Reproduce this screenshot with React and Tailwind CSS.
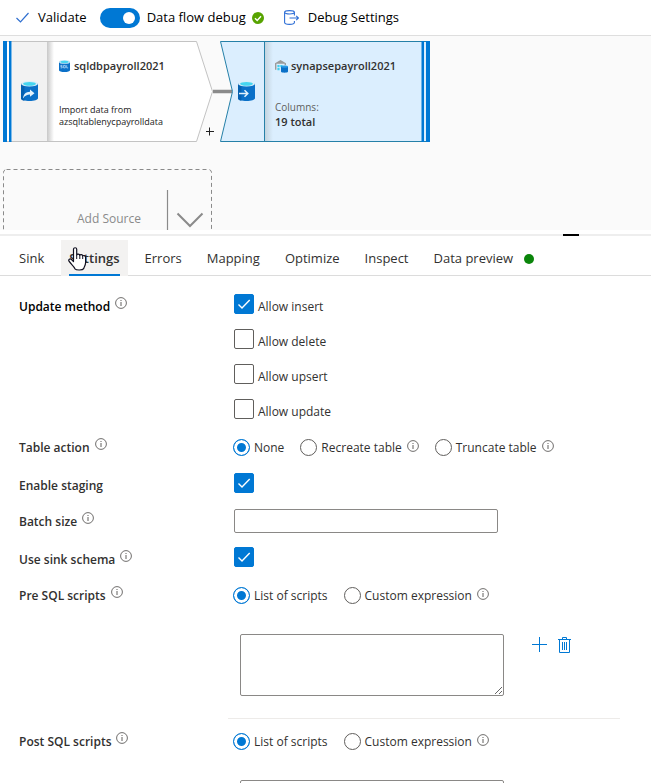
import React from "react";

const TABS = ["Sink", "Settings", "Errors", "Mapping", "Optimize", "Inspect", "Data preview"];

function InfoIcon({ className = "" }) {
  return (
    <svg className={`size-3 shrink-0 ${className}`} viewBox="0 0 12 12" fill="none" stroke="#605e5c" aria-hidden="true">
      <circle cx="6" cy="6" r="5.4" strokeWidth="0.9" />
      <path d="M6 5v4M6 3v1" strokeWidth="1" />
    </svg>
  );
}

function Cylinder({ className, children }) {
  return (
    <svg className={className} viewBox="0 0 17 20" aria-hidden="true">
      <path d="M0 2.6v14.6C0 18.8 3.8 20 8.5 20s8.5-1.2 8.5-2.8V2.6z" fill="#0a70c8" />
      <path d="M0 2.6v14.6C0 18.8 1.6 19.4 3.4 19.7V3z" fill="#0560b0" />
      <ellipse cx="8.5" cy="2.8" rx="8.5" ry="2.8" fill="#d9eef8" />
      <ellipse cx="8.5" cy="2.8" rx="6.4" ry="1.9" fill="#45d5f0" />
      {children}
    </svg>
  );
}

function SqlIcon() {
  return (
    <svg className="h-3 w-[11px] shrink-0" viewBox="0 0 11 12" aria-hidden="true">
      <path d="M0 1.8v8.4C0 11.2 2.5 12 5.5 12s5.5-.8 5.5-1.8V1.8z" fill="#0a70c8" />
      <ellipse cx="5.5" cy="1.9" rx="5.5" ry="1.9" fill="#c6e8f6" />
      <ellipse cx="5.5" cy="1.9" rx="4" ry="1.1" fill="#45d5f0" />
      <path d="M3.4 5.4H1.8v1.2h1.4v1.3H1.6M4.6 5.4h1.7v2.5H4.6zM7.7 5.2v2.7h1.5" fill="none" stroke="#cdeaff" strokeWidth=".7" />
    </svg>
  );
}

function SynapseIcon() {
  return (
    <svg className="h-3.5 w-[13px] shrink-0" viewBox="0 0 13 14" aria-hidden="true">
      <path d="M0 4.2 5.5 1 11 4.2v2H9.6V4.8H1.4v6H0z" fill="#9b9b9b" />
      <path d="M2.4 6h2.2v2.2H2.4zM5.3 6h2.2v2.2H5.3zM2.4 9h2.2v2.2H2.4z" fill="#3fd0ee" />
      <path d="M6 7.6v5c0 .8 1.500 1.200 3.500 1.200s3.500-.4 3.500-1.200v-5z" fill="#0a70c8" />
      <ellipse cx="9.5" cy="7.6" rx="3.5" ry="1.2" fill="#2b9be6" />
    </svg>
  );
}

function Check() {
  return (
    <svg className="pointer-events-none absolute inset-0 size-5" viewBox="0 0 20 20" fill="none" stroke="#fff" strokeWidth="1.4" aria-hidden="true">
      <path d="M4.5 10.5 8 14l7.7-8" />
    </svg>
  );
}

function Checkbox({ id, checked, label }) {
  return (
    <div className="flex h-5 items-start gap-1">
      <span className="relative size-5 shrink-0">
        <input
          id={id}
          type="checkbox"
          defaultChecked={checked}
          className="block size-5 appearance-none rounded-xs border border-[#605e5c] bg-white checked:border-[#0078d4] checked:bg-[#0078d4]"
        />
        {checked && <Check />}
      </span>
      {label && <label htmlFor={id} className="pt-[3px] leading-5">{label}</label>}
    </div>
  );
}

function Radio({ name, label, checked, info }) {
  const id = `${name}-${label.replace(/ /g, "-").toLowerCase()}`;
  return (
    <div className="flex items-center">
      <input
        id={id}
        name={name}
        type="radio"
        defaultChecked={checked}
        className="size-[17px] shrink-0 appearance-none rounded-full border border-[#605e5c] bg-white checked:border-[#0078d4] checked:bg-[#0078d4] checked:shadow-[inset_0_0_0_3px_white]"
      />
      <label htmlFor={id} className="pt-px pl-1 leading-5 whitespace-nowrap">{label}</label>
      {info && <InfoIcon className="mb-0.5 ml-[5px]" />}
    </div>
  );
}

function Field({ label, htmlFor, info, bold, low, className, children }) {
  const Tag = htmlFor ? "label" : "span";
  return (
    <div className={`flex items-start ${className}`}>
      <div className={`flex w-[215px] shrink-0 items-start gap-[5px] font-semibold ${low ? "pt-[3px]" : "pt-px"} ${bold ? "text-black" : ""}`}>
        <Tag htmlFor={htmlFor} className="leading-5">{label}</Tag>
        {info && <InfoIcon />}
      </div>
      {children}
    </div>
  );
}

function ScriptOptions({ name }) {
  return (
    <div role="radiogroup" aria-label={name} className="-ml-px flex h-5 items-center gap-4">
      <Radio name={name} label="List of scripts" checked />
      <Radio name={name} label="Custom expression" info />
    </div>
  );
}

function ScriptEditor({ label }) {
  return (
    <div className="mt-7 ml-[221px] flex items-start">
      <textarea aria-label={label} className="block h-[62px] w-[264px] rounded-xs border border-[#8a8886] bg-white" />
      <button type="button" aria-label="Add script" className="mt-[3px] ml-7">
        <svg className="size-[15px]" viewBox="0 0 15 15" fill="#0078d4"><path d="M7 0h1v15H7zM0 7h15v1H0z" /></svg>
      </button>
      <button type="button" aria-label="Delete script" className="mt-[3px] ml-[11px]">
        <svg className="h-4 w-[13px]" viewBox="0 0 13 16" fill="none" stroke="#0078d4">
          <path d="M0 2.5h13M4.5 2V.5h4V2M1.5 2.5v13h10v-13" />
          <path d="M4.500 5v8M6.500 5v8M8.500 5v8" />
        </svg>
      </button>
    </div>
  );
}

function Toolbar() {
  return (
    <header className="flex h-9 shrink-0 items-center border-b border-[#dedede] pl-4 text-[13px] text-black">
      <button type="button" className="flex items-center gap-[9px]">
        <svg className="h-[11px] w-[13px]" viewBox="0 0 13 11" fill="none" stroke="#2f6fd0" strokeWidth="1.2"><path d="m.5 6 4 4 8-9" /></svg>
        <span className="pt-px">Validate</span>
      </button>
      <button type="button" role="switch" aria-checked="true" aria-label="Data flow debug" className="ml-[13px] flex h-5 w-10 items-center justify-end rounded-full bg-[#0078d4] pr-[5px]">
        <span className="size-3 rounded-full bg-white" />
      </button>
      <span className="ml-[7px]">Data flow debug</span>
      <svg className="ml-1.5 size-3" viewBox="0 0 12 12" aria-hidden="true">
        <circle cx="6" cy="6" r="6" fill="#57a300" />
        <path d="m3 6.2 2.2 2.2L9 4.2" fill="none" stroke="#fff" strokeWidth="1.4" />
      </svg>
      <button type="button" className="ml-5 flex items-center gap-[9px]">
        <svg className="h-[15px] w-[15px]" viewBox="0 0 15 15" fill="none" stroke="#2f6fd6" strokeWidth="1.1">
          <ellipse cx="5.5" cy="2.3" rx="4.9" ry="1.7" />
          <path d="M.6 2.3v10.2c0 1 2.2 1.9 4.9 1.9s4.9-.9 4.9-1.9v-1.6M10.4 2.3v3.2M5.5 8h9M12.2 5.8 14.4 8l-2.2 2.2" />
        </svg>
        <span className="pt-px">Debug Settings</span>
      </button>
    </header>
  );
}

function Canvas() {
  return (
    <section aria-label="Data flow" className="relative h-[194px] shrink-0 overflow-hidden bg-[#fafafa]">
      <svg className="absolute top-[5px] left-[3px] h-[102px] w-[428px]" viewBox="0 0 428 102" aria-hidden="true">
        <defs>
          <linearGradient id="fold-a"><stop stopColor="#c8c8c8" /><stop offset="1" stopColor="#fff" /></linearGradient>
          <linearGradient id="fold-b"><stop stopColor="#c3d3de" /><stop offset="1" stopColor="#dbeefe" /></linearGradient>
        </defs>
        <path d="M.5.5h193l16 50-16 50H.5z" fill="#fff" stroke="#c3c3c3" />
        <path d="M9 1h35v99H9z" fill="#f2f2f2" />
        <path d="M44 1h7v99h-7z" fill="url(#fold-a)" />
        <path d="M0 0h4v101H0zM6 0h2.5v101H6z" fill="#0078d4" />
        <path d="M210 50.5h19" stroke="#8a8a8a" strokeWidth="3.5" />
        <path d="M217.500.5H426.500v100H217.500l12-50z" fill="#dbeefe" stroke="#2580a8" />
        <path d="M262 1h8v99h-8z" fill="url(#fold-b)" />
        <path d="M261.500 1v99" stroke="#2580a8" />
        <path d="M423 0h4v101h-4zM418.500 0h2.500v101h-2.500z" fill="#0078d4" />
        <path d="M203 90.500h8M206.500 86.500v8" stroke="#222" />
      </svg>
      <Cylinder className="absolute top-[45px] left-[21px] h-5 w-[17px]">
        <path d="M2 17.500c.4-4.500 2.800-6.500 7-6.800V8.500l4.500 3.700L9 15.800v-2.300c-3 0-5 1-7 4z" fill="#e4f3fc" />
      </Cylinder>
      <Cylinder className="absolute top-[45px] left-[238px] h-5 w-[17px]">
        <path d="M1 12.500h8.500M6.500 9.300l3.300 3.200-3.300 3.200" fill="none" stroke="#e4f3fc" strokeWidth="1.500" />
      </Cylinder>

      <div className="absolute top-5 left-[59px] text-[#323130]">
        <div className="flex items-center gap-1 text-[11px] leading-5 font-semibold"><SqlIcon />sqldbpayroll2021</div>
        <p className="mt-7 text-[9px] leading-3 text-[#222]">Import data from<br />azsqltablenycpayrolldata</p>
      </div>
      <div className="absolute top-5 left-[275px] text-[#323130]">
        <div className="flex items-center gap-[3px] text-[11px] leading-5 font-semibold"><SynapseIcon />synapsepayroll2021</div>
        <p className="mt-6 text-[10px] leading-[14px] text-[#605e5c]">Columns:</p>
        <p className="text-[11px] leading-4 font-semibold">19 total</p>
      </div>

      <button type="button" className="absolute top-[133px] left-[3px] h-[82px] w-[209px] rounded-sm text-xs text-[#8a8a8a]">
        <svg className="absolute inset-0 size-full" viewBox="0 0 209 82" fill="none" stroke="#8a8a8a" aria-hidden="true">
          <rect x=".5" y=".5" width="208" height="81" rx="3" strokeDasharray="4 3" />
          <path d="M164.500 21v60" strokeWidth="1.200" />
          <path d="m174.500 44.500 12.500 12.500 12.500-12.500" strokeWidth="2" />
        </svg>
        <span className="absolute top-10 left-[74px] leading-5">Add Source</span>
      </button>
    </section>
  );
}

function HandCursor() {
  return (
    <svg className="absolute top-[7px] left-[7px] h-6 w-[19px]" viewBox="0 0 19 24" aria-hidden="true">
      <path
        d="M5.500 14.500V2.300C5.500.2 8.700.2 8.700 2.300V8c.2-1.300 2.900-1.200 3.100.3.500-1.100 2.700-.9 2.900.7.600-.9 2.900-.6 2.900 1.400v5.200c0 3-1.700 4.400-1.900 6-1 1.800-7.500 1.900-8.700.2C6.300 19.600 2.800 16.900 1 14.200c-.9-1.600 1-3 2.500-1.700z"
        fill="#fff" stroke="#101020" strokeWidth="1.200" strokeLinejoin="round"
      />
      <path d="M8.700 8v4M11.800 8.300V12M14.700 9v3" stroke="#101020" strokeWidth="1" />
    </svg>
  );
}

function Tabs() {
  return (
    <div role="tablist" className="flex h-9 shrink-0 items-stretch gap-[9px] border-b border-[#dcdcdc] pl-[11px] text-[13px]">
      {TABS.map((tab) => {
        const active = tab === "Settings";
        return (
          <button
            key={tab}
            type="button"
            role="tab"
            aria-selected={active}
            className={
              active
                ? "relative -mb-px flex items-center bg-[#f3f2f1] px-2 font-semibold after:absolute after:inset-x-2 after:bottom-0 after:h-0.5 after:bg-[#0078d4]"
                : "flex items-center px-2 whitespace-nowrap"
            }
          >
            <span className="pt-0.5">{tab}</span>
            {active && <HandCursor />}
            {tab === "Data preview" && <span className="mt-0.5 ml-[11px] size-2.5 rounded-full bg-[#0a850a]" />}
          </button>
        );
      })}
    </div>
  );
}

export default function App() {
  return (
    <div className="flex h-screen flex-col overflow-hidden bg-white font-['Open_Sans','Noto_Sans',sans-serif] text-xs text-[#323130]">
      <Toolbar />
      <Canvas />
      <div className="mt-1 mb-1 flex h-0.5 shrink-0 justify-end bg-[#eee] pr-[72px]">
        <div className="h-0.5 w-4 bg-black" />
      </div>
      <Tabs />
      <form className="min-h-0 flex-1 overflow-hidden pt-[18px] pl-[19px]">
        <Field label="Update method" info bold low>
          <div className="flex flex-col gap-[15px]">
            <Checkbox id="insert" label="Allow insert" checked />
            <Checkbox id="delete" label="Allow delete" />
            <Checkbox id="upsert" label="Allow upsert" />
            <Checkbox id="update" label="Allow update" />
          </div>
        </Field>
        <Field label="Table action" info className="mt-[18px]">
          <div role="radiogroup" aria-label="Table action" className="-ml-px flex h-5 items-center gap-4">
            <Radio name="action" label="None" checked />
            <Radio name="action" label="Recreate table" info />
            <Radio name="action" label="Truncate table" info />
          </div>
        </Field>
        <Field label="Enable staging" htmlFor="staging" low className="mt-[15px]">
          <Checkbox id="staging" checked />
        </Field>
        <Field label="Batch size" htmlFor="batch" info low className="mt-[13px]">
          <input id="batch" type="text" className="h-6 w-[264px] rounded-xs border border-[#8a8886] bg-white px-2" />
        </Field>
        <Field label="Use sink schema" htmlFor="schema" info low className="mt-3.5">
          <Checkbox id="schema" checked />
        </Field>
        <Field label="Pre SQL scripts" info className="mt-[15px]">
          <ScriptOptions name="pre-scripts" />
        </Field>
        <ScriptEditor label="Pre SQL script" />
        <hr className="mt-[22px] mr-[31px] ml-[209px] border-[#edebe9]" />
        <Field label="Post SQL scripts" info className="mt-3">
          <ScriptOptions name="post-scripts" />
        </Field>
        <ScriptEditor label="Post SQL script" />
      </form>
    </div>
  );
}
